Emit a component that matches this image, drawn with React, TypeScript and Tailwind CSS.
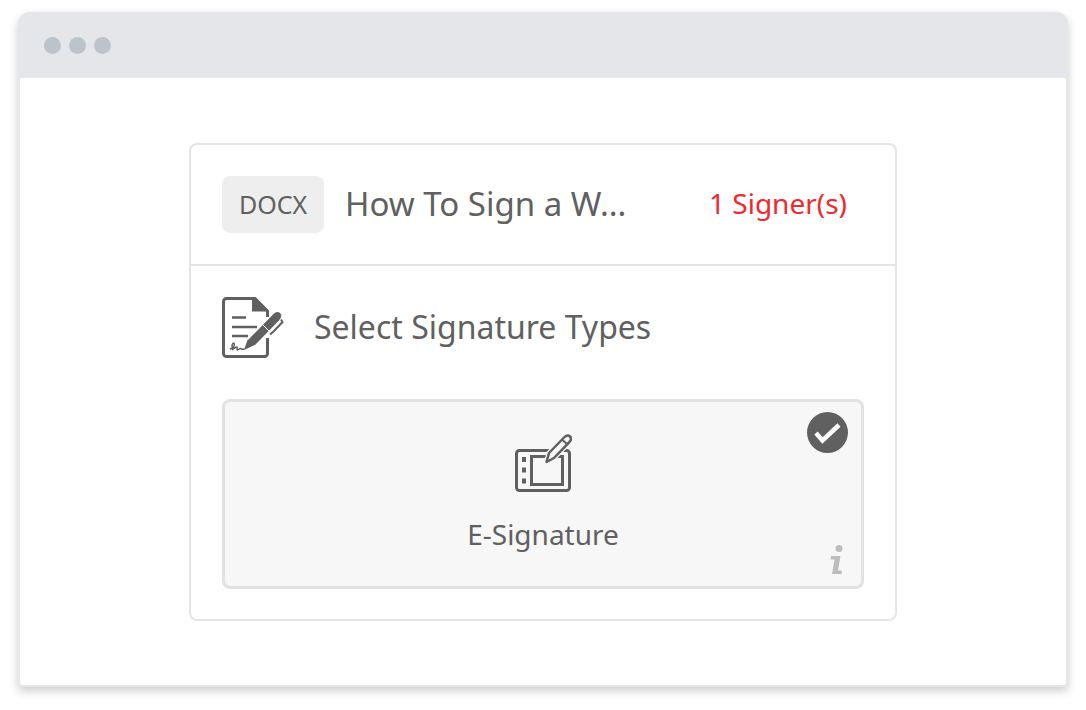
import { useState } from 'react';

function DocumentPenIcon() {
    return (
        <svg viewBox="0 0 62 61" className="w-[62px] h-[61px] shrink-0" fill="none" stroke="#606060" strokeWidth="3" aria-hidden="true">
            <path d="M45.5 20V14L33 1.5H4.5a3 3 0 0 0-3 3v52a3 3 0 0 0 3 3h38a3 3 0 0 0 3-3V41" />
            <path d="M30 1v13.5h16V13L34 1z" fill="#606060" stroke="none" />
            <path d="M10 20.5h14M10 30h25M10 39h16" strokeWidth="2.4" />
            <path d="M8 52c3-.5 5.500-3 4-6-2 0-2.500 3-1.500 6.500 2-1 3-2.500 4.500-2.500.5 1-.5 3 .5 3s2-2 3-1.500 1.500 1.500 4 .5" strokeWidth="1.5" />
            <path d="M22 53l3.500-10 6 5.500z" fill="#606060" stroke="none" />
            <path d="M26 43L51 17.500q4-4 7-1.500t-1 7.500L33 48l-5 1.500-3-3z" fill="#606060" stroke="none" />
            <path d="M40.500 27.500l6.500 6.500" stroke="#fff" strokeWidth="1" />
            <path d="M48 37.500l4-3.500 8.500-9-1.500-2.500" strokeWidth="2" />
        </svg>
    );
}

function TabletIcon() {
    return (
        <svg viewBox="0 0 58 58" className="w-[58px] h-[58px]" fill="none" stroke="#606060" strokeWidth="3" aria-hidden="true">
            <rect x="2.5" y="16.5" width="53" height="40" rx="3" />
            <rect x="17.5" y="22.5" width="31" height="28" />
            <path d="M10 23v5M10 33.500v5M10 44.500v5" strokeWidth="4" />
            <path d="M32.500 28l2.500-9L50 3.500q3.500-3.500 6-1t-1 6L40 24z" fill="#f7f7f7" stroke="#f7f7f7" strokeWidth="5" />
            <path d="M32.500 28l2.500-9L50 3.500q3.500-3.500 6-1t-1 6L40 24z" fill="#f7f7f7" strokeWidth="2.5" strokeLinejoin="round" />
            <path d="M48 5.500l5.500 5" strokeWidth="2" />
        </svg>
    );
}

export default function App() {
    const [selected, setSelected] = useState(true);

    return (
        <div className="min-h-screen bg-white px-[18px] pt-3 pb-6 font-['Noto_Sans',sans-serif] text-[#606060]">
            <main className="rounded-t-xl rounded-b-sm bg-white border-2 border-t-0 border-[#e4e6ea] shadow-[0_4px_10px_rgba(0,0,0,0.2)]">
                {/* Window bar */}
                <div className="-mx-0.5 h-[66px] rounded-t-xl bg-[#e4e6ea] flex items-center gap-2 px-[26px]">
                    <span className="size-[17px] rounded-full bg-[#bdc3ca]" />
                    <span className="size-[17px] rounded-full bg-[#bdc3ca]" />
                    <span className="size-[17px] rounded-full bg-[#bdc3ca]" />
                </div>

                <div className="px-8 py-16">
                    <section className="mx-auto mt-px max-w-[708px] rounded-lg border-2 border-[#e4e4e4]">
                        <header className="flex items-center border-b-2 border-[#e4e4e4] py-[31px] pl-[31px] pr-12">
                            <span className="flex h-[57px] w-[102px] items-center justify-center rounded-lg bg-[#eeeeee] text-[25px]">
                                DOCX
                            </span>
                            <h1 className="ml-[21px] pb-0.5 text-[33px] leading-10">How To Sign a W...</h1>
                            <span className="ml-auto pb-1 text-[28px] leading-10 text-[#f1282d]">1 Signer(s)</span>
                        </header>

                        <div className="px-[31px] pt-[31px] pb-[30px]">
                            <div className="flex items-center gap-[30px]">
                                <DocumentPenIcon />
                                <h2 className="pb-0.5 text-[32px] leading-10">Select Signature Types</h2>
                            </div>

                            <div className="relative mt-[41px] rounded-lg border-[3px] border-[#e2e2e2] bg-[#f7f7f7]">
                                <label htmlFor="e-signature" className="flex cursor-pointer flex-col items-center pt-8 pb-[34px]">
                                    <TabletIcon />
                                    <span className="mt-6 text-[28px] leading-9">E-Signature</span>
                                </label>
                                <input
                                    id="e-signature"
                                    type="checkbox"
                                    checked={selected}
                                    onChange={(e) => setSelected(e.target.checked)}
                                    className="absolute top-2.5 right-[13px] size-[41px] appearance-none rounded-full bg-[#cccccc] checked:bg-[#606060]"
                                />
                                <svg viewBox="0 0 41 41" className="pointer-events-none absolute top-2.5 right-[13px] size-[41px]" fill="none" aria-hidden="true">
                                    <path d="M9 21l6.500 7.500L32 13" stroke="#fff" strokeWidth="4.5" />
                                </svg>
                                <button type="button" aria-label="About E-Signature" className="absolute right-[17px] bottom-3">
                                    <svg viewBox="0 0 14 29" className="h-[29px] w-3.5" fill="#bcbebe" aria-hidden="true">
                                        <circle cx="9" cy="3.5" r="3.5" />
                                        <path d="M1 11h9.500L8 25.500h4L11.500 29H2l2.500-14.500H.5z" />
                                    </svg>
                                </button>
                            </div>
                        </div>
                    </section>
                </div>
            </main>
        </div>
    );
}
